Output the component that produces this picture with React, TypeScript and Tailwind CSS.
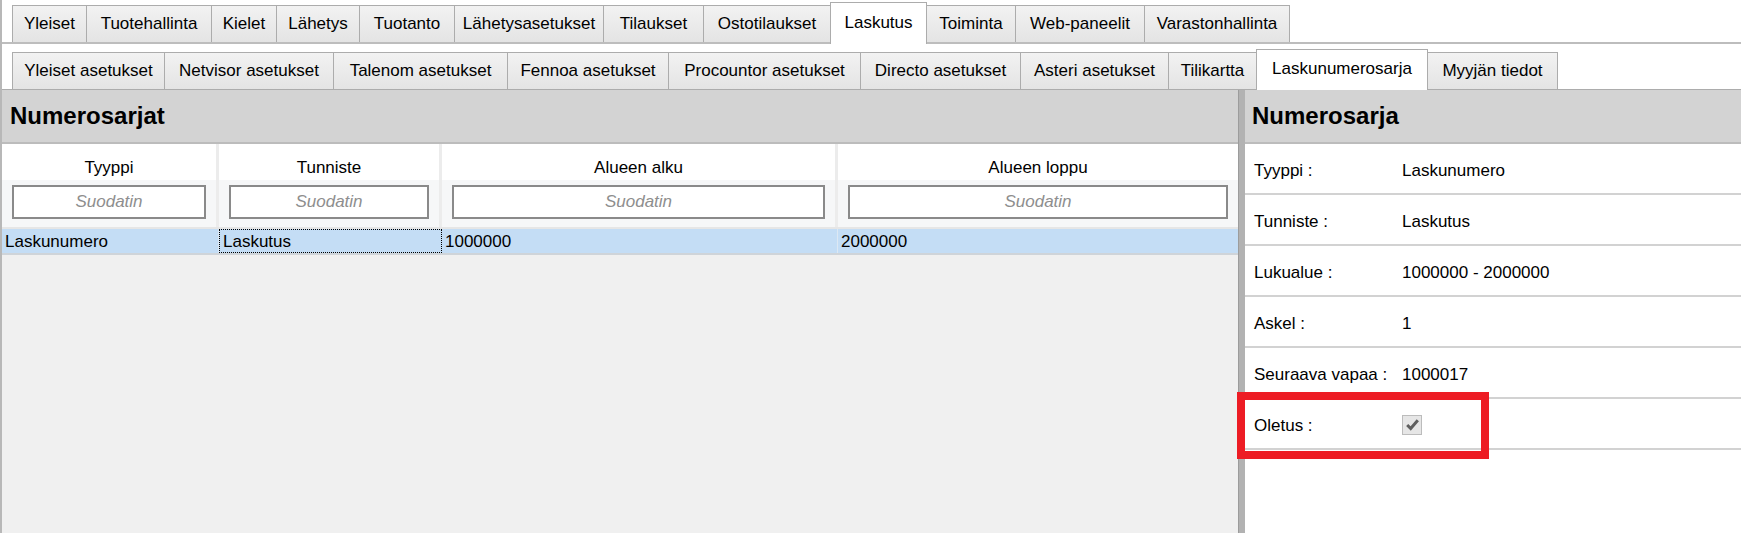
const topTabs = [
  { label: 'Yleiset', w: 'w-[75px]' },
  { label: 'Tuotehallinta', w: 'w-[126px]' },
  { label: 'Kielet', w: 'w-[66px]' },
  { label: 'Lähetys', w: 'w-[84px]' },
  { label: 'Tuotanto', w: 'w-[96px]' },
  { label: 'Lähetysasetukset', w: 'w-[150px]' },
  { label: 'Tilaukset', w: 'w-[101px]' },
  { label: 'Ostotilaukset', w: 'w-[128px]' },
  { label: 'Laskutus', w: 'w-[97px]', active: true },
  { label: 'Toiminta', w: 'w-[90px]' },
  { label: 'Web-paneelit', w: 'w-[130px]' },
  { label: 'Varastonhallinta', w: 'w-[146px]' },
]

const subTabs = [
  { label: 'Yleiset asetukset', w: 'w-[153px]' },
  { label: 'Netvisor asetukset', w: 'w-[170px]' },
  { label: 'Talenom asetukset', w: 'w-[175px]' },
  { label: 'Fennoa asetukset', w: 'w-[162px]' },
  { label: 'Procountor asetukset', w: 'w-[193px]' },
  { label: 'Directo asetukset', w: 'w-[161px]' },
  { label: 'Asteri asetukset', w: 'w-[149px]' },
  { label: 'Tilikartta', w: 'w-[89px]' },
  { label: 'Laskunumerosarja', w: 'w-[172px]', active: true },
  { label: 'Myyjän tiedot', w: 'w-[131px]' },
]

const columns = [
  { title: 'Tyyppi', w: 'w-[217px]', value: 'Laskunumero' },
  { title: 'Tunniste', w: 'w-[223px]', value: 'Laskutus', focus: true },
  { title: 'Alueen alku', w: 'w-[396px]', value: '1000000' },
  { title: 'Alueen loppu', w: 'w-[400px]', value: '2000000' },
]

const details = [
  { label: 'Tyyppi :', value: 'Laskunumero' },
  { label: 'Tunniste :', value: 'Laskutus' },
  { label: 'Lukualue :', value: '1000000 - 2000000' },
  { label: 'Askel :', value: '1' },
  { label: 'Seuraava vapaa :', value: '1000017' },
]

type TabProps = { label: string; w: string; active?: boolean }

// one strip of WPF-like tabs; the active tab is taller and covers the strip's bottom line
function TabStrip({ tabs, activeHeight, overlap }: { tabs: TabProps[]; activeHeight: string; overlap: string }) {
  return (
    <>
      {tabs.map((t, i) => (
        <div key={t.label} className={`${i > 0 ? '-ml-px' : ''} ${t.active ? `${overlap} relative z-10` : ''}`}>
          {t.active ? (
            <div className={`${t.w} ${activeHeight} flex items-center justify-center pb-[2px] border border-b-0 border-[#acacac] bg-white`}>
              {t.label}
            </div>
          ) : (
            <div className={`${t.w} h-[37px] flex items-center justify-center border border-b-0 border-[#acacac] bg-gradient-to-b from-[#f2f2f2] to-[#e4e4e4]`}>
              {t.label}
            </div>
          )}
        </div>
      ))}
    </>
  )
}

export default function App() {
  return (
    <div
      className="relative w-[1741px] h-[533px] overflow-hidden bg-white border-l-2 border-[#b8b8b8] text-[17px] text-black"
      style={{ fontFamily: '"Liberation Sans", Arial, sans-serif' }}
    >
      {/* Main tabs */}
      <div className="h-[44px] flex items-end pl-[10px] border-b-2 border-[#bdbdbd]">
        <TabStrip tabs={topTabs} activeHeight="h-[42px]" overlap="-mb-[2px]" />
      </div>

      {/* Sub tabs */}
      <div className="h-[46px] flex items-end pl-[10px] border-b border-[#acacac]">
        <TabStrip tabs={subTabs} activeHeight="h-[41px]" overlap="-mb-px" />
      </div>

      <div className="flex h-[443px]">
        {/* Numerosarjat list */}
        <div className="w-[1236px] flex flex-col bg-[#f0f0f0]">
          <div className="h-[54px] flex items-center pl-[8px] bg-[#d3d3d3] border-b-2 border-[#bcbcbc] font-bold text-[24px]">
            Numerosarjat
          </div>
          <div className="flex h-[36px] bg-white">
            {columns.map((c) => (
              <div key={c.title} className={`${c.w} flex items-end justify-center border-r-[3px] border-[#ececec] last:border-r-0`}>
                {c.title}
              </div>
            ))}
          </div>
          <div className="flex h-[49px] bg-[#f6f7f8] border-b-2 border-[#e6e6e6]">
            {columns.map((c) => (
              <div key={c.title} className={`${c.w} flex items-start pt-[5px] px-[10px] border-r-[3px] border-[#ececec] last:border-r-0`}>
                <div className="w-full h-[34px] flex items-center justify-center bg-white border-2 border-[#8a8a8a] italic text-[#8e8e8e]">
                  Suodatin
                </div>
              </div>
            ))}
          </div>
          <div className="flex h-[26px] bg-[#c4ddf5] border-b-2 border-[#cfd4d9]">
            {columns.map((c) => (
              <div
                key={c.title}
                className={`${c.w} flex items-center pl-[3px] leading-none ${
                  c.focus ? 'border border-dotted border-black' : 'border-r border-[#dde8f3] last:border-r-0'
                }`}
              >
                {c.value}
              </div>
            ))}
          </div>
        </div>

        {/* Splitter */}
        <div className="w-[7px] bg-[#b2b2b2] border-l border-[#9c9c9c]" />

        {/* Numerosarja details */}
        <div className="flex-1 flex flex-col bg-white">
          <div className="h-[54px] flex items-center pl-[7px] bg-[#d3d3d3] border-b-2 border-[#bcbcbc] font-bold text-[24px]">
            Numerosarja
          </div>
          {details.map((d) => (
            <div key={d.label} className="h-[51px] flex items-center pt-[5px] border-b-2 border-[#d2d2d2]">
              <span className="w-[157px] pl-[9px]">{d.label}</span>
              <span>{d.value}</span>
            </div>
          ))}
          <div className="h-[51px] flex items-center pt-[2px] border-b-2 border-[#d2d2d2]">
            <span className="w-[157px] pl-[9px] pt-[3px]">Oletus :</span>
            <span className="w-[20px] h-[20px] flex items-center justify-center bg-[#e6e6e6] border border-[#bcbcbc]">
              <svg viewBox="0 0 16 16" className="w-[17px] h-[17px]">
                <path d="M3 8.5 L6.3 11.8 L13 4" fill="none" stroke="#5f5f5f" strokeWidth="2.8" />
              </svg>
            </span>
          </div>
        </div>
      </div>

      {/* Red highlight annotation */}
      <div className="absolute left-[1235px] top-[392px] w-[252px] h-[67px] border-[8px] border-[#ed1c24]" />
    </div>
  )
}
